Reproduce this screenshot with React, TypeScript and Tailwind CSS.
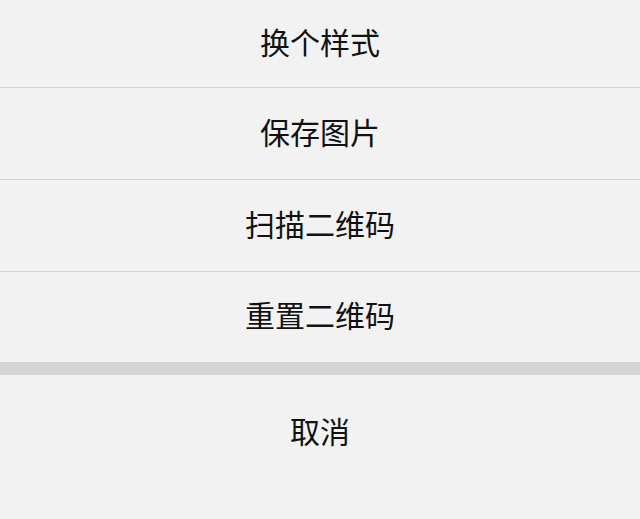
const items = ["换个样式", "保存图片", "扫描二维码", "重置二维码"];
const heights = ["h-[88px]", "h-[92px]", "h-[92px]", "h-[90px]"];

const font = { fontFamily: '"Noto Sans CJK SC", "Noto Sans", sans-serif' };

export default function App() {
  return (
    <div className="w-[640px] h-[519px] bg-[#f2f2f2] flex flex-col overflow-hidden" style={font}>
      {items.map((label, i) => (
        <div
          key={label}
          className={`${heights[i]} shrink-0 flex items-center justify-center pb-[5px] text-[30px] text-[#111111] ${
            i < items.length - 1 ? "border-b border-[#d2d2d2]" : ""
          }`}
        >
          {label}
        </div>
      ))}
      <div className="h-[13px] shrink-0 bg-[#d4d4d4]" />
      <div className="h-[116px] shrink-0 flex items-center justify-center pb-[5px] text-[30px] text-[#111111]">
        取消
      </div>
    </div>
  );
}
